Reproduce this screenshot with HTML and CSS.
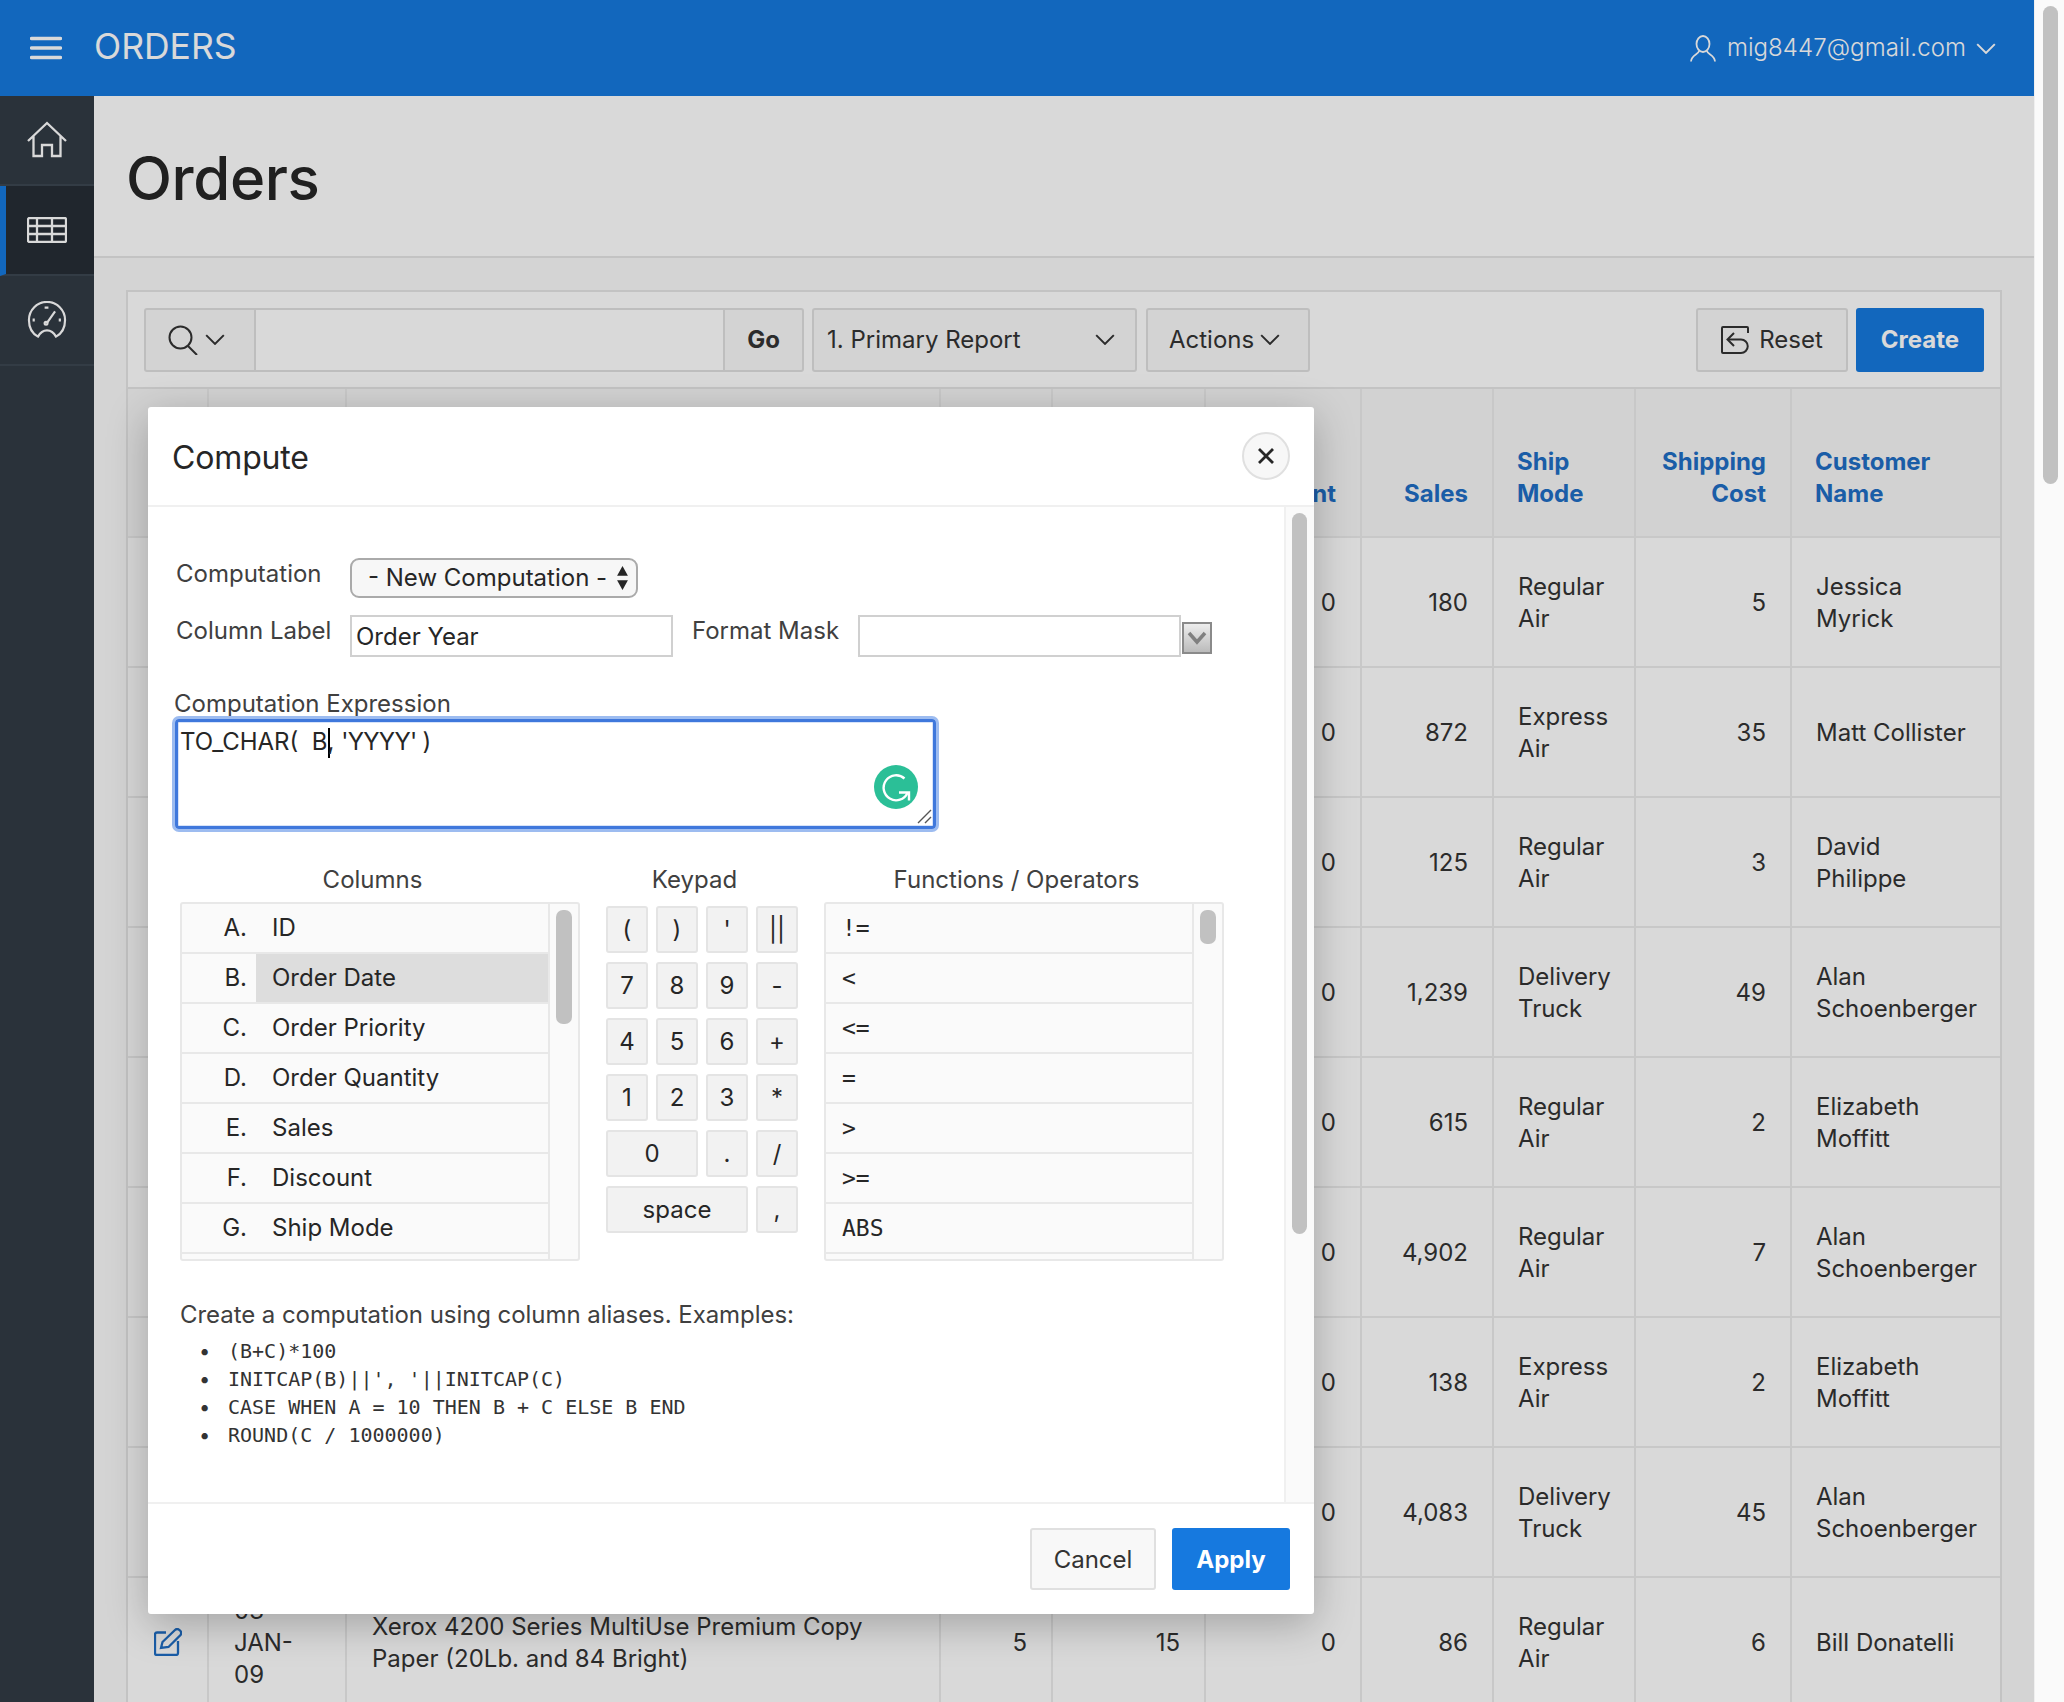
FILE: index.html
```html
<!DOCTYPE html>
<html lang="en">
<head>
    <meta charset="UTF-8">
    <title>Orders</title>
    <link rel="stylesheet" href="styles.css">
</head>
<body>
    <div class="page">
        <header class="top-bar">
            <svg class="menu-icon" viewBox="0 0 32 24"><path d="M1.500 2.500h29M1.500 12h29M1.500 21.500h29"/></svg>
            <span class="app-name">ORDERS</span>
            <div class="user-menu">
                <svg class="user-icon" viewBox="0 0 26 27"><ellipse cx="13" cy="9" rx="6.500" ry="8"/><path d="M9 16c0 3-8 4-8 10.500M17 16c0 3 8 4 8 10.500"/></svg>
                <span class="user-name">mig8447@gmail.com</span>
                <svg class="chevron chevron-light" viewBox="0 0 18 10"><path d="M1 1l8 8 8-8"/></svg>
            </div>
        </header>

        <div class="page-body">
            <nav class="side-nav">
                <div class="nav-item">
                    <svg class="nav-icon" viewBox="0 0 40 36"><path d="M1 19L20 1l19 18M6.500 14v20h8.500V23h10v11h8.500V14"/></svg>
                </div>
                <div class="nav-item nav-item-active">
                    <svg class="nav-icon nav-icon-table" viewBox="0 0 40 26"><rect x="1" y="1" width="38" height="24" rx="1.500"/><path d="M1 9h38M1 17h38M10 1v24M25 1v24"/></svg>
                </div>
                <div class="nav-item">
                    <svg class="nav-icon" viewBox="0 0 40 40"><path d="M10.500 37.500C4 34 1 27 1 20a19 19 0 0 1 38 0c0 7-3 14-9.500 17.500C27 33 24 31 20 31s-7 2-9.500 6.500z"/><path d="M20 23l8.500-12M17.500 7h4M6 18.500v3M33.500 18.500v3"/><circle cx="19" cy="23.500" r="1.500"/></svg>
                </div>
            </nav>

            <main class="content">
                <div class="title-bar">
                    <h1>Orders</h1>
                </div>

                <section class="region">
                    <div class="toolbar">
                        <div class="search-group">
                            <div class="search-type">
                                <svg class="search-icon" viewBox="0 0 30 30"><circle cx="12.500" cy="12.500" r="11"/><path d="M20 21l9 9"/></svg>
                                <svg class="chevron" viewBox="0 0 18 10"><path d="M1 1l8 8 8-8"/></svg>
                            </div>
                            <div class="search-input"></div>
                            <button class="btn btn-go">Go</button>
                        </div>
                        <div class="report-select">
                            <span>1. Primary Report</span>
                            <svg class="chevron" viewBox="0 0 18 10"><path d="M1 1l8 8 8-8"/></svg>
                        </div>
                        <button class="btn btn-actions">Actions
                            <svg class="chevron" viewBox="0 0 18 10"><path d="M1 1l8 8 8-8"/></svg>
                        </button>
                        <div class="toolbar-spacer"></div>
                        <button class="btn btn-reset">
                            <svg class="reset-icon" viewBox="0 0 28 28"><path d="M27 7V2a1 1 0 0 0-1-1H2a1 1 0 0 0-1 1v24a1 1 0 0 0 1 1h18a6.700 6.700 0 0 0 0-13.500H7"/><path d="M13 7l-6.500 6.500L13 20"/></svg>
                            Reset
                        </button>
                        <button class="btn btn-hot btn-create">Create</button>
                    </div>

                    <table class="report">
                        <colgroup>
                            <col class="col-edit"><col class="col-date"><col class="col-product"><col class="col-qty"><col class="col-price"><col class="col-discount"><col class="col-sales"><col class="col-mode"><col class="col-cost"><col class="col-customer">
                        </colgroup>
                        <thead>
                            <tr>
                                <th></th><th></th><th></th><th></th><th></th>
                                <th class="num">Discount</th>
                                <th class="num">Sales</th>
                                <th>Ship Mode</th>
                                <th class="num">Shipping Cost</th>
                                <th>Customer Name</th>
                            </tr>
                        </thead>
                        <tbody>
                            <tr><td></td><td></td><td></td><td></td><td></td><td class="num">0</td><td class="num">180</td><td>Regular Air</td><td class="num">5</td><td>Jessica Myrick</td></tr>
                            <tr><td></td><td></td><td></td><td></td><td></td><td class="num">0</td><td class="num">872</td><td>Express Air</td><td class="num">35</td><td>Matt Collister</td></tr>
                            <tr><td></td><td></td><td></td><td></td><td></td><td class="num">0</td><td class="num">125</td><td>Regular Air</td><td class="num">3</td><td>David Philippe</td></tr>
                            <tr><td></td><td></td><td></td><td></td><td></td><td class="num">0</td><td class="num">1,239</td><td>Delivery Truck</td><td class="num">49</td><td>Alan Schoenberger</td></tr>
                            <tr><td></td><td></td><td></td><td></td><td></td><td class="num">0</td><td class="num">615</td><td>Regular Air</td><td class="num">2</td><td>Elizabeth Moffitt</td></tr>
                            <tr><td></td><td></td><td></td><td></td><td></td><td class="num">0</td><td class="num">4,902</td><td>Regular Air</td><td class="num">7</td><td>Alan Schoenberger</td></tr>
                            <tr><td></td><td></td><td></td><td></td><td></td><td class="num">0</td><td class="num">138</td><td>Express Air</td><td class="num">2</td><td>Elizabeth Moffitt</td></tr>
                            <tr><td></td><td></td><td></td><td></td><td></td><td class="num">0</td><td class="num">4,083</td><td>Delivery Truck</td><td class="num">45</td><td>Alan Schoenberger</td></tr>
                            <tr>
                                <td class="edit-cell"><svg class="edit-icon" viewBox="0 0 28 28"><path d="M12 4.500H3a2 2 0 0 0-2 2V25a2 2 0 0 0 2 2h19a2 2 0 0 0 2-2V13"/><path d="M7 20l1.500-6L21 2c1.500-1.500 3.500-1 5 .5s1.500 3 .5 4.500L14.500 19z"/></svg></td>
                                <td class="text-wide">03 JAN-09</td>
                                <td class="text-wide">Xerox 4200 Series MultiUse Premium Copy Paper (20Lb. and 84 Bright)</td>
                                <td class="num">5</td><td class="num">15</td><td class="num">0</td><td class="num">86</td><td>Regular Air</td><td class="num">6</td><td>Bill Donatelli</td>
                            </tr>
                        </tbody>
                    </table>
                </section>
            </main>
        </div>

        <div class="overlay"></div>
    </div>

    <div class="page-scrollbar"><div class="page-thumb"></div></div>

    <div class="dialog">
        <div class="dialog-head">
            <h2>Compute</h2>
            <div class="dialog-close">
                <svg viewBox="0 0 18 18"><path d="M2 2l14 14M16 2L2 16"/></svg>
            </div>
        </div>

        <div class="dialog-main">
            <div class="dialog-body">
                <div class="form-row">
                    <label class="form-label">Computation</label>
                    <div class="native-select">
                        <span>- New Computation -</span>
                        <svg class="updown" viewBox="0 0 12 22"><path d="M6 0l5 9H1zM6 22l-5-9h10z"/></svg>
                    </div>
                </div>
                <div class="form-row form-row-second">
                    <label class="form-label">Column Label</label>
                    <div class="text-input">Order Year</div>
                    <label class="form-label form-label-mask">Format Mask</label>
                    <div class="text-input"></div>
                    <div class="lov-btn">
                        <svg viewBox="0 0 20 14"><path d="M2 2l8 9 8-9"/></svg>
                    </div>
                </div>

                <label class="expr-label">Computation Expression</label>
                <div class="expr-box">TO_CHAR(&nbsp; B<span class="caret"></span>, <span class="expr-tail">'YYYY' )</span>
                    <div class="grammarly">
                        <svg viewBox="0 0 44 44"><path d="M30.500 13.500A12.500 12.500 0 1 0 33.500 28"/><path d="M25 27.500h10v8"/></svg>
                    </div>
                    <svg class="resize-grip" viewBox="0 0 15 15"><path d="M1 14L14 1M8 14l6-6"/></svg>
                </div>

                <div class="pickers">
                    <div class="picker picker-columns">
                        <div class="picker-title">Columns</div>
                        <div class="list-box">
                            <ul class="pick-list">
                                <li><span class="alias">A.</span><span class="col-name">ID</span></li>
                                <li class="is-selected"><span class="alias">B.</span><span class="col-name">Order Date</span></li>
                                <li><span class="alias">C.</span><span class="col-name">Order Priority</span></li>
                                <li><span class="alias">D.</span><span class="col-name">Order Quantity</span></li>
                                <li><span class="alias">E.</span><span class="col-name">Sales</span></li>
                                <li><span class="alias">F.</span><span class="col-name">Discount</span></li>
                                <li><span class="alias">G.</span><span class="col-name">Ship Mode</span></li>
                                <li></li>
                            </ul>
                            <div class="list-scroll"><div class="list-thumb"></div></div>
                        </div>
                    </div>

                    <div class="picker picker-keypad">
                        <div class="picker-title">Keypad</div>
                        <div class="keypad">
                            <button class="key">(</button><button class="key">)</button><button class="key">'</button><button class="key">||</button>
                            <button class="key">7</button><button class="key">8</button><button class="key">9</button><button class="key">-</button>
                            <button class="key">4</button><button class="key">5</button><button class="key">6</button><button class="key">+</button>
                            <button class="key">1</button><button class="key">2</button><button class="key">3</button><button class="key">*</button>
                            <button class="key key-2">0</button><button class="key">.</button><button class="key">/</button>
                            <button class="key key-3">space</button><button class="key">,</button>
                        </div>
                    </div>

                    <div class="picker picker-functions">
                        <div class="picker-title">Functions / Operators</div>
                        <div class="list-box">
                            <ul class="pick-list pick-list-mono">
                                <li>!=</li><li>&lt;</li><li>&lt;=</li><li>=</li><li>&gt;</li><li>&gt;=</li><li>ABS</li><li></li>
                            </ul>
                            <div class="list-scroll"><div class="list-thumb list-thumb-small"></div></div>
                        </div>
                    </div>
                </div>

                <p class="help-text">Create a computation using column aliases. Examples:</p>
                <ul class="help-list">
                    <li>(B+C)*100</li>
                    <li>INITCAP(B)||', '||INITCAP(C)</li>
                    <li>CASE WHEN A = 10 THEN B + C ELSE B END</li>
                    <li>ROUND(C / 1000000)</li>
                </ul>
            </div>
            <div class="dialog-scroll"><div class="dialog-thumb"></div></div>
        </div>

        <div class="dialog-foot">
            <button class="btn btn-cancel">Cancel</button>
            <button class="btn btn-hot btn-apply">Apply</button>
        </div>
    </div>
</body>
</html>
```

FILE: styles.css
```css
/* Reset & Base Styles */
* {
    margin: 0;
    padding: 0;
    box-sizing: border-box;
}

html, body {
    height: 1702px;
    overflow: hidden;
}

body {
    display: flex;
    position: relative;
    font-family: 'Inter', sans-serif;
    font-size: 24px;
    line-height: 32px;
    color: #333;
    background: #fff;
}

button {
    font: inherit;
    color: inherit;
}

/* Page shell */
.page {
    position: relative;
    width: 2034px;
    height: 1702px;
    display: flex;
    flex-direction: column;
    overflow: hidden;
}

.overlay {
    position: absolute;
    top: 0;
    left: 0;
    right: 0;
    bottom: 0;
    background: rgba(0, 0, 0, 0.15);
}

.page-scrollbar {
    width: 30px;
    padding: 6px 6px 0 8px;
    background: #fafafa;
    border-left: 1px solid #efefef;
}

.page-thumb {
    height: 478px;
    background: #c1c1c1;
    border-radius: 8px;
}

.top-bar {
    height: 96px;
    flex: none;
    display: flex;
    align-items: center;
    padding: 0 38px 0 30px;
    background: #1679df;
    color: #fff;
}

.menu-icon {
    width: 32px;
    height: 24px;
    fill: none;
    stroke: #fff;
    stroke-width: 3.500;
    stroke-linecap: round;
}

.app-name {
    margin: 0 0 2px 32px;
    font-size: 35.500px;
    font-weight: 400;
}

.user-menu {
    margin-left: auto;
    display: flex;
    align-items: center;
}

.user-icon {
    width: 26px;
    height: 27px;
    fill: none;
    stroke: #fff;
    stroke-width: 1.800;
}

.user-name {
    margin: 0 10px 0 11px;
    font-size: 24px;
    font-weight: 300;
    letter-spacing: 0.08px;
}

.chevron {
    width: 20px;
    height: 11px;
    fill: none;
    stroke: #333;
    stroke-width: 1.800;
}

.chevron-light {
    stroke: #fff;
}

.page-body {
    flex: 1;
    display: flex;
    min-height: 0;
}

/* Side navigation */
.side-nav {
    width: 94px;
    flex: none;
    background: #323b45;
}

.nav-item {
    height: 90px;
    display: flex;
    align-items: center;
    justify-content: center;
    border-bottom: 2px solid #3d4752;
}

.nav-item-active {
    background: #262d35;
    border-left: 6px solid #1679df;
    padding-right: 6px;
}

.nav-icon {
    width: 40px;
    height: 38px;
    fill: none;
    stroke: #fff;
    stroke-width: 2.300;
}

.nav-icon-table {
    height: 26px;
}

/* Main content */
.content {
    flex: 1;
    min-width: 0;
    background: #fafafa;
}

.title-bar {
    height: 162px;
    padding: 3px 32px 0;
    display: flex;
    align-items: center;
    background: #fff;
    border-bottom: 2px solid #e6e6e6;
}

.title-bar h1 {
    font-size: 60px;
    line-height: 72px;
    font-weight: 500;
    letter-spacing: -0.4px;
    color: #262626;
}

.region {
    margin: 32px 32px 0;
    background: #fff;
    border: 2px solid #e6e6e6;
    border-bottom: 0;
}

/* Toolbar */
.toolbar {
    height: 97px;
    display: flex;
    align-items: center;
    padding: 0 16px;
    border-bottom: 2px solid #e6e6e6;
}

.toolbar-spacer {
    flex: 1;
}

.btn {
    height: 64px;
    border: 2px solid #e0e0e0;
    border-radius: 3px;
    background: #f8f8f8;
    cursor: pointer;
}

.btn-hot {
    border: 0;
    background: #1679df;
    color: #fff;
    font-weight: 700;
}

.search-group {
    display: flex;
    width: 660px;
    height: 64px;
}

.search-type {
    width: 112px;
    display: flex;
    align-items: center;
    justify-content: flex-start;
    padding-left: 22px;
    gap: 7px;
    background: #f8f8f8;
    border: 2px solid #e0e0e0;
    border-radius: 3px 0 0 3px;
}

.search-icon {
    width: 30px;
    height: 30px;
    fill: none;
    stroke: #333;
    stroke-width: 2;
}

.search-input {
    flex: 1;
    background: #fff;
    border: 2px solid #e0e0e0;
    border-left: 0;
    border-right: 0;
}

.btn-go {
    width: 81px;
    font-weight: 700;
    border-radius: 0 3px 3px 0;
}

.report-select {
    width: 325px;
    height: 64px;
    margin-left: 8px;
    padding: 0 20px 0 13px;
    display: flex;
    align-items: center;
    justify-content: space-between;
    background: #f8f8f8;
    border: 2px solid #e0e0e0;
    border-radius: 3px;
}

.btn-actions {
    width: 164px;
    margin-left: 9px;
    padding-left: 21px;
    display: flex;
    align-items: center;
    justify-content: flex-start;
    gap: 6px;
}

.btn-reset {
    width: 152px;
    display: flex;
    align-items: center;
    justify-content: center;
    gap: 10px;
}

.reset-icon {
    width: 28px;
    height: 28px;
    fill: none;
    stroke: #333;
    stroke-width: 2;
}

.btn-create {
    width: 128px;
    margin-left: 8px;
}

/* Report table */
.report {
    width: 1872px;
    table-layout: fixed;
    border-collapse: collapse;
}

.col-edit { width: 80px; }
.col-date { width: 138px; }
.col-product { width: 594px; }
.col-qty { width: 112px; }
.col-price { width: 153px; }
.col-discount { width: 156px; }
.col-sales { width: 132px; }
.col-mode { width: 142px; }
.col-cost { width: 156px; }
.col-customer { width: 209px; }

.report th,
.report td {
    padding: 0 24px;
    border-left: 2px solid #ebebeb;
    border-bottom: 2px solid #ebebeb;
    text-align: left;
}

.report th:first-child,
.report td:first-child {
    border-left: 0;
}

.report th {
    height: 148px;
    padding-left: 23px;
    padding-bottom: 26px;
    vertical-align: bottom;
    font-weight: 700;
    color: #1f6ec5;
    background: #f7f7f7;
}

.report td {
    height: 130px;
    padding-top: 1px;
    vertical-align: middle;
    color: #333;
}

.report .num {
    text-align: right;
}

.report .edit-cell {
    padding: 0 0 0 26px;
}

.report .text-wide {
    padding-left: 25px;
}

.edit-icon {
    display: block;
    width: 28px;
    height: 28px;
    fill: none;
    stroke: #1f6ec5;
    stroke-width: 2.300;
}

/* Compute dialog */
.dialog {
    position: absolute;
    top: 407px;
    left: 148px;
    width: 1166px;
    height: 1207px;
    display: flex;
    flex-direction: column;
    background: #fff;
    border-radius: 3px;
    box-shadow: 0 10px 40px rgba(0, 0, 0, 0.25);
}

.dialog-head {
    height: 100px;
    flex: none;
    display: flex;
    align-items: center;
    justify-content: space-between;
    padding: 0 24px 0 24px;
    border-bottom: 2px solid #f0f0f0;
}

.dialog-head h2 {
    margin-top: 3px;
    font-size: 32px;
    line-height: 44px;
    font-weight: 400;
    letter-spacing: -0.15px;
    color: #262626;
}

.dialog-close {
    width: 48px;
    height: 48px;
    display: flex;
    align-items: center;
    justify-content: center;
    border: 2px solid #e0e0e0;
    border-radius: 50%;
    background: #f7f7f7;
}

.dialog-close svg {
    width: 18px;
    height: 18px;
    fill: none;
    stroke: #262626;
    stroke-width: 2.800;
}

.dialog-main {
    flex: 1;
    min-height: 0;
    display: flex;
}

.dialog-body {
    flex: 1;
    min-width: 0;
    padding: 51px 0 0 28px;
    overflow: hidden;
}

.dialog-scroll {
    width: 30px;
    flex: none;
    padding: 6px 7px 0 6px;
    background: #fafafa;
    border-left: 2px solid #f0f0f0;
}

.dialog-thumb {
    height: 721px;
    background: #c1c1c1;
    border-radius: 8px;
}

.dialog-foot {
    height: 112px;
    flex: none;
    display: flex;
    justify-content: flex-end;
    gap: 16px;
    padding: 24px 24px 0 0;
    border-top: 2px solid #f0f0f0;
}

.btn-cancel {
    width: 126px;
    height: 62px;
    padding-top: 2px;
}

.btn-apply {
    width: 118px;
    height: 62px;
    padding-top: 2px;
}

/* Form */
.form-row {
    display: flex;
    align-items: flex-start;
}

.form-row-second {
    margin-top: 17px;
}

.form-label {
    width: 174px;
    flex: none;
    color: #404040;
}

.form-label-mask {
    width: 166px;
    margin-left: 19px;
}

.native-select {
    width: 288px;
    height: 40px;
    padding: 0 7px 0 16px;
    display: flex;
    align-items: center;
    justify-content: space-between;
    background: #f7f7f7;
    border: 2px solid #aaa;
    border-radius: 9px;
    color: #262626;
}

.updown {
    width: 13px;
    height: 24px;
    fill: #262626;
}

.text-input {
    width: 323px;
    height: 42px;
    padding: 0 4px;
    line-height: 40px;
    border: 2px solid #d0d0d0;
    color: #262626;
}

.lov-btn {
    width: 30px;
    height: 32px;
    margin: 7px 0 0 1px;
    display: flex;
    align-items: center;
    justify-content: center;
    background: linear-gradient(#ededed, #bbb);
    border: 2px solid #8a8a8a;
}

.lov-btn svg {
    width: 20px;
    height: 14px;
    fill: none;
    stroke: #808080;
    stroke-width: 3.500;
}

.expr-label {
    display: block;
    margin: 31px 0 0 -2px;
    height: 31px;
    color: #404040;
}

.expr-box {
    position: relative;
    width: 761px;
    height: 110px;
    margin-left: -1px;
    padding: 4px 2px;
    border: 3px solid #3f78dc;
    box-shadow: 0 0 0 3px #9dbcf0, inset 0 0 0 1px #d7e3f9;
    border-radius: 4px;
    color: #262626;
}

.expr-tail {
    letter-spacing: -0.7px;
}

.caret {
    display: inline-block;
    width: 2px;
    height: 30px;
    margin-right: -2px;
    vertical-align: -8px;
    background: #000;
}

.grammarly {
    position: absolute;
    right: 15px;
    bottom: 17px;
    width: 44px;
    height: 44px;
    border-radius: 50%;
    background: #2bbf97;
}

.grammarly svg {
    display: block;
    width: 44px;
    height: 44px;
    fill: none;
    stroke: #fff;
    stroke-width: 2.400;
}

.resize-grip {
    position: absolute;
    right: 1px;
    bottom: 2px;
    width: 15px;
    height: 15px;
    fill: none;
    stroke: #555;
    stroke-width: 1.400;
}

/* Columns, keypad, functions */
.pickers {
    display: flex;
    align-items: flex-start;
    margin: 35px 0 0 4px;
}

.picker-title {
    height: 38px;
    padding-right: 15px;
    text-align: center;
    color: #404040;
}

.picker-columns {
    width: 400px;
}

.picker-keypad {
    width: 192px;
    margin-left: 26px;
}

.picker-functions {
    width: 400px;
    margin-left: 26px;
}

.list-box {
    height: 359px;
    display: flex;
    overflow: hidden;
    background: #fafafa;
    border: 2px solid #e8e8e8;
    border-radius: 3px;
}

.pick-list {
    flex: 1;
    list-style: none;
    border-right: 2px solid #e8e8e8;
}

.pick-list li {
    height: 50px;
    display: flex;
    align-items: center;
    border-bottom: 2px solid #e8e8e8;
    color: #262626;
}

.alias {
    width: 74px;
    height: 100%;
    flex: none;
    padding-right: 9px;
    display: flex;
    align-items: center;
    justify-content: flex-end;
}

.col-name {
    flex: 1;
    height: 100%;
    display: flex;
    align-items: center;
    padding-left: 16px;
}

.is-selected .col-name {
    background: #ddd;
}

.pick-list-mono li {
    padding-left: 16px;
    font-family: 'DejaVu Sans Mono', monospace;
    font-size: 23px;
}

.list-scroll {
    width: 28px;
    flex: none;
    padding: 6px 6px 0 6px;
}

.list-thumb {
    height: 114px;
    background: #c1c1c1;
    border-radius: 7px;
}

.list-thumb-small {
    height: 34px;
}

.keypad {
    display: grid;
    grid-template-columns: repeat(4, 42px);
    grid-auto-rows: 47px;
    gap: 9px 8px;
    margin-top: 4px;
}

.key {
    background: #f2f2f2;
    border: 2px solid #e4e4e4;
    border-radius: 3px;
    color: #262626;
}

.key-2 {
    grid-column: span 2;
}

.key-3 {
    grid-column: span 3;
}

/* Help text */
.help-text {
    margin: 38px 0 0 4px;
    letter-spacing: -0.06px;
    color: #404040;
}

.help-list {
    margin: 6px 0 0 26px;
    list-style: none;
    font-family: 'DejaVu Sans Mono', monospace;
    font-size: 20px;
    line-height: 28px;
    color: #333;
}

.help-list li {
    display: flex;
}

.help-list li::before {
    content: "\2022";
    width: 29px;
    margin-left: -3px;
    flex: none;
    font-family: 'Inter', sans-serif;
}
```
